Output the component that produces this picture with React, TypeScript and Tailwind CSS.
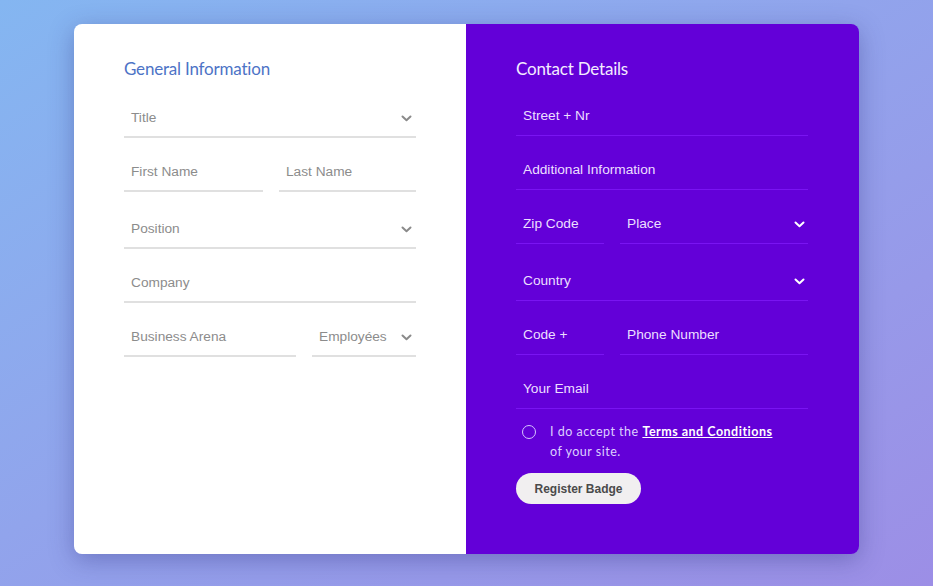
import React from 'react';

const Chevron: React.FC<{ className?: string }> = ({ className }) => (
    <svg width="11" height="7" viewBox="0 0 11 7" className={className} fill="none">
        <path d="M1.5 1.5 L5.5 5.2 L9.5 1.5" stroke="currentColor" strokeWidth="2" strokeLinecap="round" strokeLinejoin="round" />
    </svg>
);

const LightField: React.FC<{ label: string; select?: boolean; className?: string }> = ({ label, select, className = '' }) => (
    <div className={`h-[41px] flex items-center justify-between border-b-2 border-[#e0e0e0] pt-[3px] pl-[7px] pr-[4px] ${className}`}>
        <span className="text-[13.7px] text-[#8c8c8c] font-['Liberation_Sans',sans-serif]">{label}</span>
        {select && <Chevron className="text-[#8a8a8a]" />}
    </div>
);

const DarkField: React.FC<{ label: string; select?: boolean; className?: string }> = ({ label, select, className = '' }) => (
    <div className={`h-[41px] flex items-center justify-between border-b border-[#7a14f2] pt-[3px] pl-[7px] pr-[3px] ${className}`}>
        <span className="text-[13.7px] text-[#ecdfff] font-['Liberation_Sans',sans-serif]">{label}</span>
        {select && <Chevron className="text-white" />}
    </div>
);

export default function App() {
    return (
        <div className="min-h-[586px] w-full bg-gradient-to-br from-[#84b6f1] to-[#9c8ee6] pt-[24px] font-['Lato',sans-serif]">
            <div className="mx-auto w-[785px] h-[530px] flex rounded-[8px] overflow-hidden shadow-[0_6px_24px_rgba(40,40,120,0.35)]">
                {/* general info */}
                <div className="w-[392px] bg-white pl-[50px] pr-[50px] pt-[33px]">
                    <h2 className="h-[24px] leading-[24px] text-[17px] text-[#4d73c6] tracking-[-0.2px]">General Information</h2>
                    <LightField label="Title" select className="mt-[16px]" />
                    <div className="mt-[13px] flex gap-[16px]">
                        <LightField label="First Name" className="w-[139px]" />
                        <LightField label="Last Name" className="flex-1" />
                    </div>
                    <LightField label="Position" select className="mt-[16px]" />
                    <LightField label="Company" className="mt-[13px]" />
                    <div className="mt-[13px] flex gap-[16px]">
                        <LightField label="Business Arena" className="w-[172px]" />
                        <LightField label="Employées" select className="flex-1" />
                    </div>
                </div>

                {/* contact details */}
                <div className="flex-1 bg-[#6300d8] pl-[50px] pr-[51px] pt-[33px]">
                    <h2 className="h-[24px] leading-[24px] text-[17px] text-[#f3ecff] tracking-[-0.2px]">Contact Details</h2>
                    <DarkField label="Street + Nr" className="mt-[14px]" />
                    <DarkField label="Additional Information" className="mt-[13px]" />
                    <div className="mt-[13px] flex gap-[16px]">
                        <DarkField label="Zip Code" className="w-[88px]" />
                        <DarkField label="Place" select className="flex-1" />
                    </div>
                    <DarkField label="Country" select className="mt-[16px]" />
                    <div className="mt-[13px] flex gap-[16px]">
                        <DarkField label="Code +" className="w-[88px]" />
                        <DarkField label="Phone Number" className="flex-1" />
                    </div>
                    <DarkField label="Your Email" className="mt-[13px]" />

                    <div className="mt-[13px] flex items-start pl-[6px]">
                        <span className="mt-[3px] w-[14px] h-[14px] rounded-full border-[1.5px] border-[#d6c4ff] shrink-0" />
                        <p className="ml-[14px] text-[12.5px] leading-[20px] text-[#ddd0ff] tracking-[0.5px]">
                            I do accept the{' '}
                            <a className="text-white font-bold underline">Terms and Conditions</a>
                            <br />
                            of your site.
                        </p>
                    </div>

                    <button className="mt-[11px] h-[31px] w-[125px] rounded-full bg-[#f1eff0] text-[12px] font-bold text-[#4a4a4a] font-['Liberation_Sans',sans-serif]">
                        Register Badge
                    </button>
                </div>
            </div>
        </div>
    );
}
